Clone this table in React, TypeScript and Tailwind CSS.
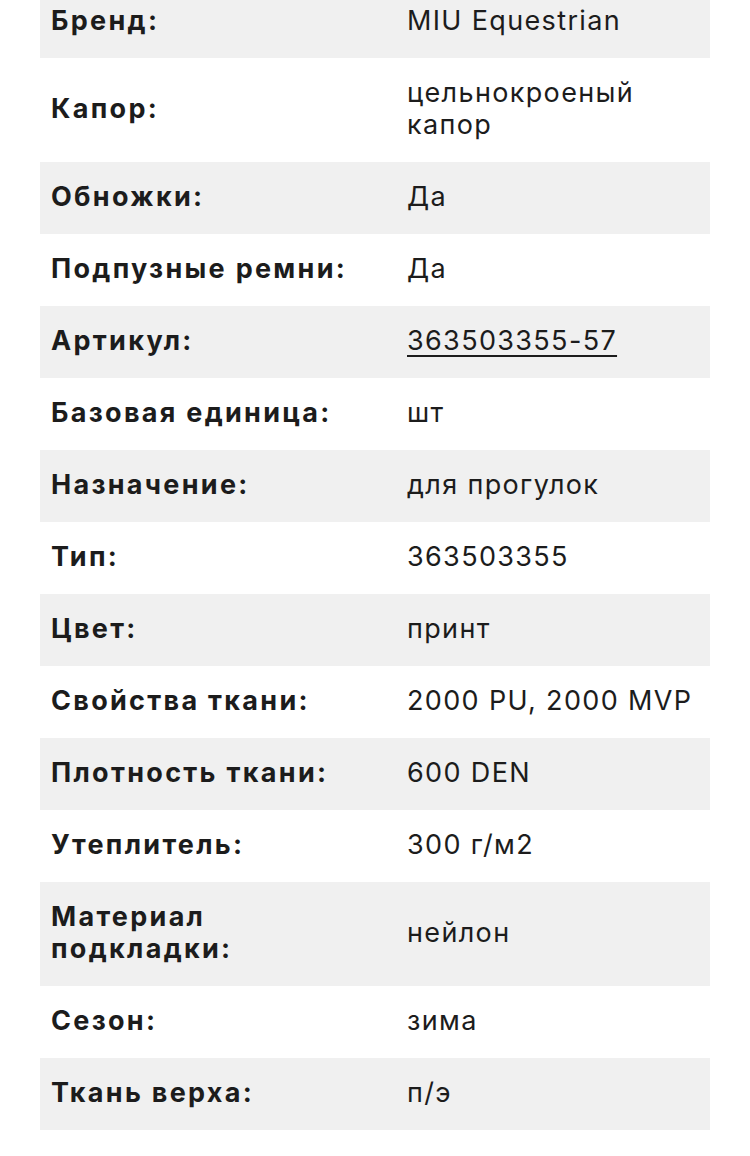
import React from "react";

type Row = { label: string; value: string; link?: boolean };

const rows: Row[] = [
  { label: "Бренд:", value: "MIU Equestrian" },
  { label: "Капор:", value: "цельнокроеный капор" },
  { label: "Обножки:", value: "Да" },
  { label: "Подпузные ремни:", value: "Да" },
  { label: "Артикул:", value: "363503355-57", link: true },
  { label: "Базовая единица:", value: "шт" },
  { label: "Назначение:", value: "для прогулок" },
  { label: "Тип:", value: "363503355" },
  { label: "Цвет:", value: "принт" },
  { label: "Свойства ткани:", value: "2000 PU, 2000 MVP" },
  { label: "Плотность ткани:", value: "600 DEN" },
  { label: "Утеплитель:", value: "300 г/м2" },
  { label: "Материал подкладки:", value: "нейлон" },
  { label: "Сезон:", value: "зима" },
  { label: "Ткань верха:", value: "п/э" },
];

export default function App() {
  return (
    <div className="min-h-[1156px] bg-white overflow-hidden">
      <div className="mx-10 mt-[-14px] font-['Inter','Noto_Sans',sans-serif] text-[27px] leading-8 text-[#1c1c1c]">
        {rows.map((r, i) => (
          <div
            key={r.label}
            className={`grid grid-cols-[356px_1fr] items-center ${i % 2 === 0 ? "bg-[#f0f0f0]" : "bg-white"}`}
          >
            <div className="pt-[19px] pb-[21px] px-[11px] font-bold tracking-[0.085em]">{r.label}</div>
            <div className="pt-[19px] pb-[21px] px-[11px] tracking-[0.05em]">
              {r.link ? (
                <a href="#" className="underline underline-offset-[5px] decoration-2">
                  {r.value}
                </a>
              ) : (
                r.value
              )}
            </div>
          </div>
        ))}
      </div>
    </div>
  );
}
